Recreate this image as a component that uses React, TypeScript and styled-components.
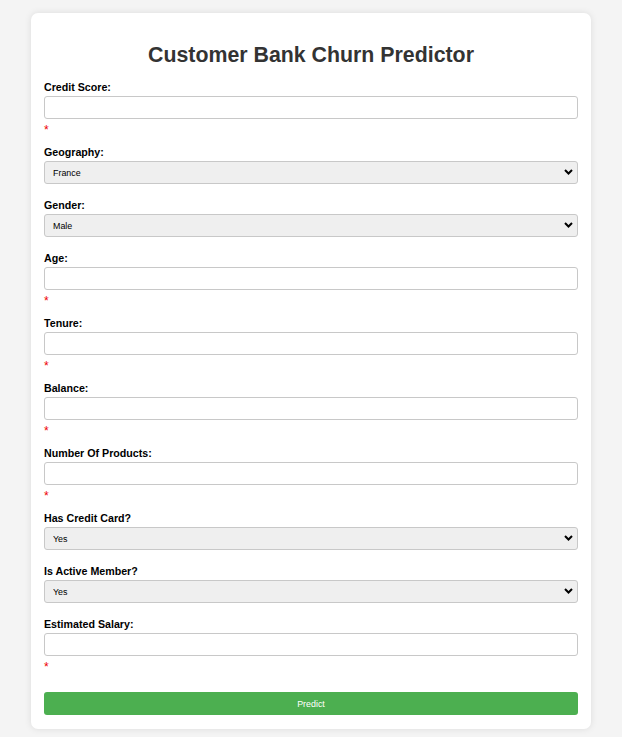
import React from 'react';
import styled, { createGlobalStyle } from 'styled-components';

const GlobalStyle = createGlobalStyle`
  html, body {
    margin: 0;
    padding: 0;
    background: #f4f4f4;
    font-family: 'Liberation Sans', Arial, sans-serif;
  }
`;

const Page = styled.div`
  padding: 13px 0 8px;
`;

const Card = styled.form`
  width: 560px;
  margin: 0 auto;
  box-sizing: border-box;
  padding: 13px 13px 14px;
  background: #fff;
  border-radius: 7px;
  box-shadow: 0 0 7px rgba(0, 0, 0, 0.1);
`;

const Title = styled.h1`
  margin: 17px 0 14px;
  font-size: 21.33px;
  line-height: 24px;
  font-weight: 700;
  color: #333;
  text-align: center;
`;

const Group = styled.div`
  margin-bottom: 15px;
`;

const Label = styled.label`
  display: block;
  margin-bottom: 3px;
  font-size: 10.67px;
  line-height: 12px;
  font-weight: 700;
  color: #000;
`;

const TextInput = styled.input`
  display: block;
  width: 100%;
  height: 23px;
  box-sizing: border-box;
  margin: 0;
  padding: 0 6px;
  border: 1px solid #c8c8c8;
  border-radius: 3px;
  background: #fff;
  font-family: inherit;
  font-size: 8.9px;
  outline: none;
`;

const SelectWrap = styled.div`
  position: relative;
`;

const Select = styled.select`
  display: block;
  width: 100%;
  height: 23px;
  box-sizing: border-box;
  margin: 0;
  padding: 0 20px 0 8px;
  border: 1px solid #c8c8c8;
  border-radius: 3px;
  background: #efefef;
  color: #000;
  font-family: inherit;
  font-size: 8.9px;
  appearance: none;
  outline: none;
`;

const Chevron = styled.svg`
  position: absolute;
  right: 5px;
  top: 8px;
  width: 9px;
  height: 6px;
  pointer-events: none;
`;

const Required = styled.div`
  height: 7px;
  padding-top: 5px;
  font-size: 12px;
  line-height: 12px;
  color: #e00;
`;

const SubmitButton = styled.button`
  display: block;
  width: 100%;
  height: 23px;
  margin-top: 24px;
  padding: 0;
  border: none;
  border-radius: 3px;
  background: #4caf50;
  color: #fff;
  font-family: inherit;
  font-size: 8.9px;
  cursor: pointer;
`;

type Field =
  | { kind: 'input'; label: string }
  | { kind: 'select'; label: string; options: string[] };

const fields: Field[] = [
  { kind: 'input', label: 'Credit Score:' },
  { kind: 'select', label: 'Geography:', options: ['France', 'Germany', 'Spain'] },
  { kind: 'select', label: 'Gender:', options: ['Male', 'Female'] },
  { kind: 'input', label: 'Age:' },
  { kind: 'input', label: 'Tenure:' },
  { kind: 'input', label: 'Balance:' },
  { kind: 'input', label: 'Number Of Products:' },
  { kind: 'select', label: 'Has Credit Card?', options: ['Yes', 'No'] },
  { kind: 'select', label: 'Is Active Member?', options: ['Yes', 'No'] },
  { kind: 'input', label: 'Estimated Salary:' },
];

const App: React.FC = () => {
  return (
    <Page>
      <GlobalStyle />
      <Card onSubmit={(e) => e.preventDefault()}>
        <Title>Customer Bank Churn Predictor</Title>

        {fields.map((field) => (
          <Group key={field.label}>
            <Label>{field.label}</Label>
            {field.kind === 'input' ? (
              <>
                <TextInput type='text' />
                <Required>*</Required>
              </>
            ) : (
              <SelectWrap>
                <Select defaultValue={field.options[0]}>
                  {field.options.map((opt) => (
                    <option key={opt}>{opt}</option>
                  ))}
                </Select>
                <Chevron viewBox='0 0 9 6'>
                  <path
                    d='M1 1 L4.5 4.5 L8 1'
                    fill='none'
                    stroke='#000'
                    strokeWidth='2'
                  />
                </Chevron>
              </SelectWrap>
            )}
          </Group>
        ))}

        <SubmitButton type='submit'>Predict</SubmitButton>
      </Card>
    </Page>
  );
};

export default App;
